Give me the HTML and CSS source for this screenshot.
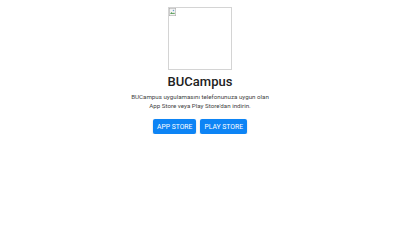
FILE: index.html
```html
<!DOCTYPE html>
<html lang="tr">
<head>
<meta charset="utf-8">
<link rel="stylesheet" href="styles.css">
</head>
<body>
<main class="page">
  <div class="logo">
    <svg class="broken" width="8" height="8" viewBox="0 0 16 16">
      <rect x="0.5" y="0.5" width="13" height="15" fill="#f4f4f4" stroke="#a0a0a0"/>
      <path d="M2 12 L5 8 L8 11 L10 9 L12 12 Z" fill="#5a9e5a"/>
      <circle cx="9" cy="5" r="1.5" fill="#6aa0d0"/>
    </svg>
  </div>
  <h1 class="title">BUCampus</h1>
  <p class="desc">BUCampus uygulamasını telefonunuza uygun olan<br>App Store veya Play Store'dan indirin.</p>
  <div class="buttons">
    <button class="btn">APP STORE</button>
    <button class="btn">PLAY STORE</button>
  </div>
</main>
</body>
</html>
```
FILE: styles.css
```css
html, body { margin: 0; padding: 0; background: #fff; }
body { font-family: Roboto, "Noto Sans", sans-serif; color: #212121; }
.page { display: flex; flex-direction: column; align-items: center; padding-top: 7px; }
.logo { width: 62px; height: 61px; border: 1px solid #d4d4d4; box-sizing: content-box; position: relative; }
.broken { position: absolute; left: 0; top: 0; }
.title { margin: 4px 0 0; font-size: 13px; font-weight: 500; line-height: 15px; color: #212121; }
.desc { margin: 4px 0 0; font-size: 6.2px; line-height: 9px; text-align: center; color: #444; }
.buttons { display: flex; gap: 4px; margin-top: 8px; }
.btn { font-family: Roboto, sans-serif; font-size: 6.8px; color: #fff; background: #0d84f5; border: none; border-radius: 2px; height: 15px; padding: 0 4px; box-shadow: 0 1px 2px rgba(0,0,0,0.2); }
```
